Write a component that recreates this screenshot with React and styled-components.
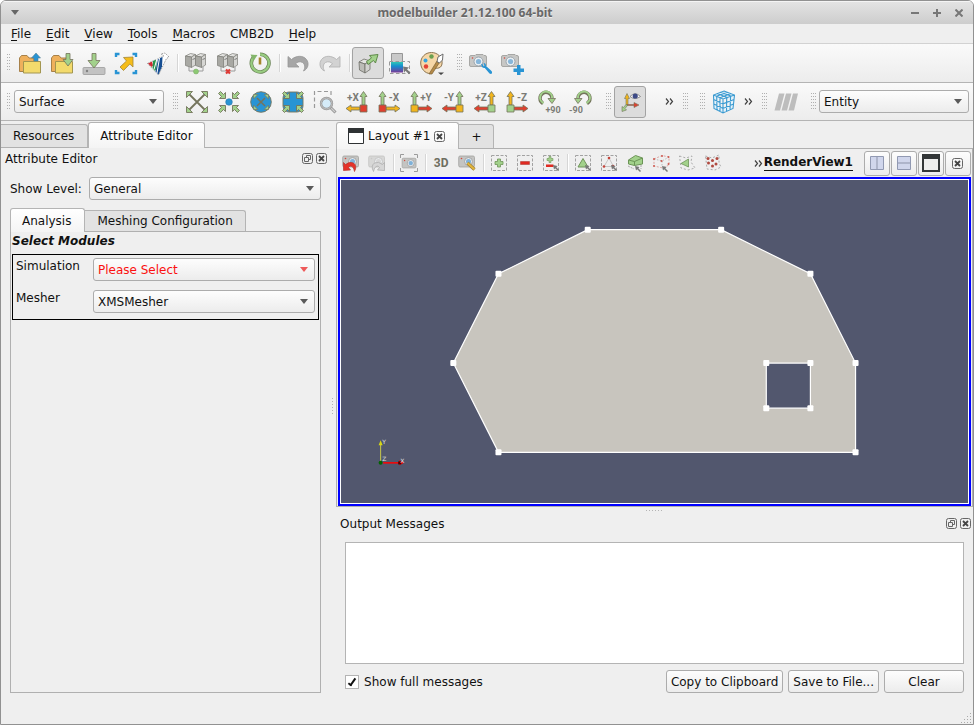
import React, { useState } from 'react';
import styled, { createGlobalStyle, css } from 'styled-components';

const GREEN = '#a2d18b';
const BLUE = '#2894d4';
const RED = '#e0402f';
const YELLOW = '#f2b51d';
const INK = '#74745c';

// ---------- icons ----------

const Svg24 = ({ children }) => (
  <svg width="24" height="24" viewBox="0 0 24 24" fill="none" aria-hidden="true">{children}</svg>
);

const Svg18 = ({ children }) => (
  <svg width="18" height="18" viewBox="0 0 18 18" fill="none" aria-hidden="true">{children}</svg>
);

const Folder = () => (
  <>
    <path d="M1.500 20.500V7l2-2.500h5.500l2 2.500h5v13.500z" fill="#efb05c" stroke="#a7814a" />
    <path d="M5.500 10.500h17v11.500h-17z" fill="#f3da6c" stroke="#a39650" />
  </>
);

const OpenIcon = () => (
  <Svg24>
    <Folder />
    <path d="M18 2l4.500 5H20v3h-4V7h-2.500z" fill={BLUE} stroke="#5c7f8f" strokeWidth=".6" />
  </Svg24>
);

const OpenDownIcon = () => (
  <Svg24>
    <Folder />
    <path d="M16 2.500h4v6h3L18 15l-5-6.500h3z" fill={GREEN} stroke={INK} strokeWidth=".8" />
  </Svg24>
);

const SaveDataIcon = () => (
  <Svg24>
    <path d="M2 16.500h20q1 0 1 1v5q0 1-1 1H2q-1 0-1-1v-5q0-1 1-1z" fill="#c2c2c2" stroke="#9c9c9c" strokeWidth=".8" />
    <circle cx="5" cy="20" r="1.200" fill="#808080" />
    <path d="M10 2.500h4v7h4L12 17l-6-7.500h4z" fill={GREEN} stroke={INK} strokeWidth=".8" />
  </Svg24>
);

const ExtractIcon = () => (
  <Svg24>
    <path d="M2 6V3h3.500M18.500 3H22v3M2 19v3h3.500M18.500 22H22v-3" stroke={BLUE} strokeWidth="2.400" />
    <path d="M19 6v10l-3.200-3-6.300 6.500-3.500-3.500L12.500 10l-3-3.500z" fill="#f5bd1a" stroke="#a38637" strokeWidth=".8" />
  </Svg24>
);

const FlaskIcon = () => (
  <Svg24>
    <path d="M1.500 12.500L18 5l-3-2 4-1 4 4-2.500 1.500L12.500 24z" fill="#fff" stroke="#777" strokeWidth=".7" strokeDasharray="1.500 1" />
    <path d="M2 12.500l4-2 1 4-1.500 1.500z" fill="#cf2a34" />
    <path d="M7 10l3.500-1.500v9l-1.500 2.500L6.500 17z" fill="#27954d" />
    <path d="M12 8l4.500-2-.5 9.500-3.500 8-3-3z" fill="#174f93" />
    <path d="M8 18.500l3-11M11 22l2.500-15" stroke="#fff" strokeWidth="1" />
  </Svg24>
);

const Server = ({ x }) => (
  <g stroke="#7d7d77" strokeWidth=".7">
    <path d={`M${x} 5l5-2.500 5 1-4 2.500z`} fill="#e2e2e0" />
    <path d={`M${x} 5l6 1v10.500l-6-2z`} fill="#a8a8a3" />
    <path d={`M${x + 6} 6l4-2.500v10.500l-4 2.500z`} fill="#d6d6d3" />
    <path d={`M${x + 7} 8.500l2.500-1`} stroke="#555" />
  </g>
);

const ConnectIcon = () => (
  <Svg24>
    <Server x={1.5} />
    <Server x={11.5} />
    <path d="M5 16v4h14v-4" stroke="#9a9a9a" />
    <circle cx="12" cy="20.500" r="2.500" fill="#8cc973" stroke="#78a865" strokeWidth=".5" />
  </Svg24>
);

const DisconnectIcon = () => (
  <Svg24>
    <Server x={1.5} />
    <Server x={11.5} />
    <path d="M5 16v4h14v-4" stroke="#9a9a9a" />
    <path d="M10 18.500l4 4M14 18.500l-4 4" stroke="#dd3a36" strokeWidth="2.200" />
  </Svg24>
);

const HistoryIcon = () => (
  <Svg24>
    <path d="M6 5.800a8.800 8.800 0 1 0 6-2.500" stroke="#6b8457" strokeWidth="3.600" />
    <path d="M6 5.800a8.800 8.800 0 1 0 6-2.500" stroke="#98cc81" strokeWidth="2.200" />
    <path d="M2.500 3.500l7 .5-4 6z" fill="#84b66c" />
    <path d="M12 6.500v7" stroke="#a5862c" strokeWidth="2.600" />
  </Svg24>
);

const UndoIcon = ({ flip, fill, stroke }) => (
  <Svg24>
    <path
      transform={flip ? 'matrix(-1 0 0 1 24 0)' : undefined}
      d="M2 5.500l3.500 3C10 4.500 17 4 20.500 8.500c3 4 1.500 9.500-3 11.500 2-3.500 1.500-7-1-8.500-2.500-1.500-5-.5-7 1.200L13 16H2z"
      fill={fill}
      stroke={stroke}
      strokeWidth=".8"
    />
  </Svg24>
);

const BoxArrowIcon = () => (
  <Svg24>
    <path d="M3 11l5-3 6 2-5 3z" fill="#e4e4e1" stroke="#6f6f68" strokeWidth=".8" />
    <path d="M3 11l6 2v9l-5.500-3z" fill="#bcbcb7" stroke="#6f6f68" strokeWidth=".8" />
    <path d="M9 13l5-3v8.500L9 22z" fill="#d2d2cf" stroke="#6f6f68" strokeWidth=".8" />
    <path d="M10.500 10.500l5-3.500-2-2.500L22 3.500 19.500 12l-2-2.500-5.500 4z" fill={GREEN} stroke="#5f8a4a" />
  </Svg24>
);

const ColorMapIcon = () => (
  <Svg24>
    <defs>
      <linearGradient id="colormap" x1="0" y1="0" x2="0" y2="1">
        <stop offset="0" stopColor="#2fc6b4" />
        <stop offset=".4" stopColor="#158dd0" />
        <stop offset="1" stopColor="#7a3a96" />
      </linearGradient>
    </defs>
    <path d="M3.500 2.500h11v9h-11z" fill="#c9c9c9" stroke="#969696" />
    <path d="M3 11h12v10.500H3z" fill="url(#colormap)" />
    <path d="M1.500 10.500h20v12h-20z" stroke="#999" strokeDasharray="3.500 2.500" />
    <path d="M15 15.500l6 1-2 1.800 3.500 3.500-1.500 1.500-3.500-3.500-1.500 2z" fill="#777" />
  </Svg24>
);

const PaletteIcon = () => (
  <Svg24>
    <path d="M11.500 1.500C5 1.500.7 6.500.7 12S5 22.500 10 22.500c2.500 0 1.500-3 3-4.500s8 1 9-5c1-6.500-4.500-11.500-10.500-11.500z" fill="#f6d7a8" stroke="#8a7350" />
    <circle cx="11.500" cy="5.500" r="2.200" fill="#6a9f4f" />
    <circle cx="5.500" cy="9.500" r="2" fill="#36a3e0" />
    <circle cx="6" cy="15.500" r="2.200" fill="#e34234" />
    <path d="M9 23l8-13 2.500 1.500L12 23z" fill="#b48a48" stroke="#7b6138" strokeWidth=".7" />
    <path d="M17 10.500l1-4.500 5-3-.5 6-3 3z" fill="#fff" stroke="#6b6b6b" />
    <path d="M18 21.500h6L21 24z" fill="#444" />
  </Svg24>
);

const CameraBody = () => (
  <>
    <path d="M2 4.500h4l1-1h7l1 1h1q1.500 0 1.500 1.500v8q0 1.500-1.500 1.500H2Q.5 15.500.5 14V6Q.5 4.500 2 4.500z" fill="#c7c7c5" stroke="#a0a09e" strokeWidth=".9" />
    <circle cx="9.500" cy="10.500" r="4.500" fill="#e9eef2" stroke="#9aa4ac" />
    <circle cx="9.500" cy="10.500" r="2.600" fill="#86b6da" />
    <circle cx="3.500" cy="7" r=".8" fill="#d34b40" />
  </>
);

const CameraToolIcon = () => (
  <Svg24>
    <CameraBody />
    <path d="M13.500 13q-1.500-1-1 2 1 2.500 3.300 2l4.700 5.500q2 1 2.500-.5.500-1.500-1-2.500l-5-4.500q0-3-2.500-3l1 2.500-1 1z" fill={BLUE} />
  </Svg24>
);

const CameraAddIcon = () => (
  <Svg24>
    <CameraBody />
    <path d="M16 14h3.500v3.500H23V21h-3.500v3H16v-3h-3.500v-3.500H16z" fill={BLUE} />
  </Svg24>
);

const Heads = ({ out }) => {
  // the same arrow head turned to each of the four corners
  const head = out ? 'M1.500 1.500h6l-6 6z' : 'M8.500 8.500h-6l2-2-3-3 2-2 3 3 2-2z';
  return [0, 90, 180, 270].map(a => (
    <path key={a} d={head} transform={`rotate(${a} 12 12)`} fill={GREEN} stroke={INK} strokeWidth=".9" />
  ));
};

const ResetIcon = () => (
  <Svg24>
    <path d="M4 4l16 16M20 4L4 20" stroke={INK} strokeWidth="1.800" />
    <Heads out />
  </Svg24>
);

const ZoomDataIcon = () => (
  <Svg24>
    <circle cx="12" cy="12" r="3.300" fill={BLUE} stroke="#2b77a8" strokeWidth=".6" />
    <Heads />
  </Svg24>
);

const ZoomClosestIcon = () => (
  <Svg24>
    <circle cx="12" cy="12" r="10.300" fill={BLUE} stroke={INK} strokeWidth=".9" />
    <path d="M8 8l8 8M16 8l-8 8" stroke={INK} strokeWidth="1.500" />
    <g transform="translate(3.500 3.500) scale(.71)"><Heads out /></g>
  </Svg24>
);

const ZoomBoxIcon = () => (
  <Svg24>
    <rect x="2" y="2" width="20" height="20" rx="6" fill={BLUE} stroke={INK} strokeWidth=".9" />
    <Heads />
  </Svg24>
);

const ZoomRectIcon = () => (
  <Svg24>
    <path d="M1.500 18V1.500H18V7" stroke="#999" strokeWidth="1.200" strokeDasharray="4 2.500" />
    <path d="M17 17l5.500 5.500" stroke="#929292" strokeWidth="3" />
    <path d="M17.500 17.500l4.500 4.500" stroke="#cfcfcf" strokeWidth="1.200" />
    <circle cx="13.500" cy="13.500" r="5.500" fill="#d5ebf8" stroke="#969696" strokeWidth="2.400" />
    <circle cx="13.500" cy="13.500" r="5.500" stroke="#c8c8c8" />
  </Svg24>
);

const AxisIcon = ({ label, right, square, up, side }) => (
  <Svg24>
    <g stroke={INK} strokeWidth=".8">
      <g transform={right ? undefined : 'matrix(-1 0 0 1 24 0)'}>
        <path d="M17 15V6.500h-2l3.500-5 3.500 5h-2V15z" fill={up} />
        <path d="M15 17H6v-2l-5 3.500 5 3.500v-2h9z" fill={side} />
        <path d="M15 15h7v7h-7z" fill={square} />
      </g>
    </g>
    <AxisText x={right ? 8 : 17} y="11" textAnchor="middle">{label}</AxisText>
  </Svg24>
);

const RotateIcon = ({ label, flip }) => (
  <Svg24>
    <g transform={flip ? 'matrix(-1 0 0 1 24 0)' : undefined}>
      <path d="M6 13.500A6 6 0 1 1 15 8" stroke={INK} strokeWidth="3.400" />
      <path d="M6.500 13A6 6 0 1 1 15 8.500" stroke={GREEN} strokeWidth="2" />
      <path d="M11 8.500h7.500l-3.500 5z" fill={GREEN} stroke={INK} strokeWidth=".8" />
    </g>
    <AxisText $size={9} x={flip ? 7 : 16} y="23" textAnchor="middle">{label}</AxisText>
  </Svg24>
);

const AxesEyeIcon = () => (
  <Svg24>
    <path d="M8 15V8.500H6.500l2.500-5 2.500 5H10V15z" fill={YELLOW} stroke={INK} strokeWidth=".6" />
    <path d="M9 14.500h7v-2l5 2.500-5 2.500v-2H9z" fill={RED} stroke={INK} strokeWidth=".6" />
    <path d="M8 14.500L5.500 17.500 4 16.500v5l4.500-1.500-1.500-1.500 2.500-3z" fill={GREEN} stroke={INK} strokeWidth=".6" />
    <path d="M12 6.500Q17 1 22.500 6.500 17 10.500 12 6.500z" fill="#fff" stroke="#777" strokeWidth=".8" />
    <circle cx="17.200" cy="6" r="2.600" fill="#3d4a86" />
  </Svg24>
);

const CubeIcon = () => (
  <Svg24>
    <path
      d="M12 1l10.500 4L21 18.500 11 23 2 18.500 1.500 5zM1.500 5L11 9l11.500-4M11 9v14M8.500 2.300l11 4M5 3.600l11 4.100M15.500 2.300l-11 4M19 3.600L8 7.800M1.700 9.500L11 13.800l11-4.300M1.900 14L11 18.500l10.500-4.500M4.700 6.300L5 20M8 7.600V21.500M14.700 7.700L14.500 21.500M18.600 6.300L18 20"
      fill="#e6f3fb"
      stroke="#3c9bd1"
      strokeWidth="1.100"
    />
  </Svg24>
);

const HatchIcon = () => (
  <Svg24>
    <path d="M5 3.500h5.500L6 20.500H.5zM12 3.500h5.500L13 20.500H7.500zM19 3.500h5L20 20.500h-5.500z" fill="#bdbdbd" />
  </Svg24>
);

const SmallCamera = ({ faded }) => (
  <g transform="translate(0 -1)" opacity={faded ? 0.55 : 1}>
    <path d="M2 3h13q1.500 0 1.500 1.500v8q0 1.500-1.500 1.500H2Q.7 14 .7 12.500v-8Q.7 3 2 3z" fill="#c4c4c2" stroke="#a2a2a0" strokeWidth=".8" />
    <circle cx="10.500" cy="8.500" r="4" fill="#e3e8eb" stroke="#a5a5a5" />
    <circle cx="10.500" cy="8.500" r="2.500" fill={faded ? '#c3c3c3' : '#7fb1d8'} />
    <circle cx="3.500" cy="5.500" r=".8" fill={faded ? '#aaa' : '#d34b40'} />
  </g>
);

const BackArrow = ({ flip, color, edge }) => (
  <path
    transform={flip ? 'matrix(-1 0 0 1 18 0)' : undefined}
    d="M1.500 8.500l2 2q4-3.500 8-1.500 4 3 1 8.500-.5-4.500-3.500-5.500-1.500 0-2.500 1.500l2 2.500-7 .5z"
    fill={color}
    stroke={edge}
    strokeWidth=".7"
  />
);

const Pointer = ({ x = 11, y = 11 }) => (
  <path transform={`translate(${x} ${y})`} d="M0 0l4.500 1-1.200 1.200L6 5 5 6 2.200 3.300 1 4.500z" fill="#777" />
);

const Dashed = () => <path d="M1.500 1.500h15v15h-15z" stroke="#a2a2a2" strokeDasharray="3 1.500" />;

const CameraUndo = () => <Svg18><SmallCamera /><BackArrow color="#e63229" edge="#b5352f" /></Svg18>;
const CameraRedo = () => <Svg18><SmallCamera faded /><BackArrow flip color="#d6d6d6" edge="#a9a9a9" /></Svg18>;

const CaptureIcon = () => (
  <Svg18>
    <path d="M.5 4V.5H4M14 .5h3.500V4M.5 14v3.500H4M14 17.500h3.500V14" stroke="#9b9b9b" />
    <g transform="translate(1.500 2.500) scale(.88)"><SmallCamera /></g>
  </Svg18>
);

const AdjustCamera = () => (
  <Svg18>
    <SmallCamera />
    <path d="M9.500 9l7 6.500" stroke="#9a7d32" strokeWidth="3.200" />
    <path d="M9.500 9l6.800 6.300" stroke="#e2b53c" strokeWidth="2" />
  </Svg18>
);

const SelectAdd = () => (
  <Svg18>
    <Dashed />
    <path d="M7.500 5h3v2.500H13v3h-2.500V13h-3v-2.500H5v-3h2.500z" fill={GREEN} stroke="#6f9459" strokeWidth=".8" />
  </Svg18>
);

const SelectRemove = () => <Svg18><Dashed /><path d="M4.500 7.500h9v3h-9z" fill="#e02a22" stroke="#a8342d" strokeWidth=".5" /></Svg18>;

const SelectToggle = () => (
  <Svg18>
    <Dashed />
    <path d="M7 2.500h2v2h2v2H9v2H7v-2H5v-2h2z" fill={GREEN} stroke="#6f9459" strokeWidth=".6" />
    <path d="M4 10.500h7.500V13H4z" fill="#e02a22" />
    <Pointer />
  </Svg18>
);

const SelectCells = () => (
  <Svg18>
    <Dashed />
    <path d="M9 4.500l5 8.500H4z" fill={GREEN} stroke="#6f9459" />
    <Pointer />
  </Svg18>
);

const SelectPoints = () => (
  <Svg18>
    <Dashed />
    <path d="M9 4l4.500 8.500H4z" stroke="#bbb" strokeWidth=".8" />
    <g fill="#c4443a"><circle cx="9" cy="4" r="1.300" /><circle cx="4" cy="12.500" r="1.300" /><circle cx="13" cy="12" r="1.300" /></g>
    <Pointer />
  </Svg18>
);

const SelectFrustum = () => (
  <Svg18>
    <path d="M2.500 6L9.500 1.500l7 2.500v6l-8 1.500-6-1.500z" fill={GREEN} stroke="#6b9456" />
    <path d="M2.500 6l6 1.500 8-3.500M8.500 7.500v4" stroke="#6b9456" />
    <path d="M2 12l6 3M15 11v4" stroke="#aaa" strokeDasharray="2 1" />
    <Pointer x={9} y={12} />
  </Svg18>
);

const FrustumPoints = () => (
  <Svg18>
    <path d="M2 5l8-3.500L17 3v8l-6 3-9-2z" stroke="#dba7a3" strokeDasharray="2 1.500" />
    <path d="M2 5l8 2 7-4M10 7v6" stroke="#bbb" strokeDasharray="1.500 1.500" />
    <g fill="#cf5a50">
      <circle cx="2" cy="5" r="1" /><circle cx="10" cy="2" r="1" /><circle cx="16.500" cy="3" r="1" /><circle cx="2" cy="12" r="1" />
      <circle cx="9.500" cy="7" r="1" /><circle cx="16.500" cy="10" r="1" />
    </g>
    <Pointer x={10} y={12} />
  </Svg18>
);

const PolyCells = () => (
  <Svg18>
    <path d="M1.500 2L8 4l6-2-1 6 4 6-7 2-7-2z" stroke="#aaa" strokeDasharray="2 2" />
    <path d="M3 9.500L10.500 5v8z" fill={GREEN} stroke="#6f9459" strokeWidth=".8" />
  </Svg18>
);

const PolyPoints = () => (
  <Svg18>
    <path d="M1.500 2L8 4l7-3v8l2 4-6 3-8-1z" stroke="#aaa" strokeDasharray="2 2" />
    <g fill="#b04a40">
      <circle cx="4" cy="4.500" r="1.500" /><circle cx="8.500" cy="6.500" r="1.500" /><circle cx="13" cy="4.500" r="1.500" />
      <circle cx="4.500" cy="9" r="1.500" /><circle cx="12" cy="10" r="1.500" /><circle cx="8.500" cy="12" r="1.500" />
    </g>
  </Svg18>
);

const SplitH = () => (
  <Svg18>
    <path d="M2.500 2.500h13v13h-13z" fill="#d0d6ec" stroke="#9199b2" />
    <path d="M9 3v12" stroke="#8c93a9" />
  </Svg18>
);

const SplitV = () => (
  <Svg18>
    <path d="M2.500 2.500h13v13h-13z" fill="#d0d6ec" stroke="#9199b2" />
    <path d="M3 9h12" stroke="#8c93a9" />
  </Svg18>
);

const WindowIcon = () => (
  <Svg18>
    <path d="M1.500 1.500h15v15h-15z" fill="#fff" stroke="#2f3234" />
    <path d="M1 1h16v5H1z" fill="#2f3234" />
  </Svg18>
);

const MaximizeIcon = () => (
  <Svg18>
    <path d="M1 1h16v16H1z" fill="#eee" stroke="#333638" strokeWidth="2" />
    <path d="M0 0h18v5H0z" fill="#333638" />
  </Svg18>
);

const CloseIcon = () => (
  <svg width="11" height="11" viewBox="0 0 11 11" fill="none" aria-hidden="true">
    <rect x=".5" y=".5" width="10" height="10" rx="2" stroke="#666" />
    <path d="M3 3l5 5M8 3L3 8" stroke="#444" strokeWidth="1.800" />
  </svg>
);

const FloatIcon = () => (
  <svg width="11" height="11" viewBox="0 0 11 11" fill="none" aria-hidden="true">
    <rect x=".5" y=".5" width="10" height="10" rx="2" stroke="#666" />
    <path d="M4.500 4.500v-2h4v4h-2M2.500 4.500h4v4h-4z" stroke="#666" />
  </svg>
);

const OverflowGlyph = () => (
  <svg width="9" height="7" viewBox="0 0 9 7" fill="none" aria-hidden="true">
    <path d="M1 .5l2.500 3L1 6.500M5 .5l2.500 3L5 6.500" stroke="#444" strokeWidth="1.200" />
  </svg>
);

// ---------- data ----------

const MENUS = [['F', 'ile'], ['E', 'dit'], ['V', 'iew'], ['T', 'ools'], ['M', 'acros'], ['', 'CMB2D'], ['H', 'elp']];

const FILE_TOOLS = [
  ['Open', OpenIcon], ['Load', OpenDownIcon], ['Save data', SaveDataIcon], ['Extract', ExtractIcon], ['Model', FlaskIcon],
];

const CAMERA_TOOLS = [
  ['Reset', ResetIcon], ['Zoom to data', ZoomDataIcon], ['Zoom closest', ZoomClosestIcon],
  ['Zoom closest to data', ZoomBoxIcon], ['Zoom to box', ZoomRectIcon],
];

const AXES = [
  { label: '+X', right: true, square: RED, up: GREEN, side: YELLOW },
  { label: '-X', right: false, square: RED, up: GREEN, side: YELLOW },
  { label: '+Y', right: false, square: YELLOW, up: GREEN, side: RED },
  { label: '-Y', right: true, square: YELLOW, up: GREEN, side: RED },
  { label: '+Z', right: true, square: GREEN, up: YELLOW, side: RED },
  { label: '-Z', right: false, square: GREEN, up: YELLOW, side: RED },
];

const SELECTION_TOOLS = [
  ['Select cells', SelectCells], ['Select points', SelectPoints], ['Frustum cells', SelectFrustum],
  ['Frustum points', FrustumPoints], ['Polygon cells', PolyCells], ['Polygon points', PolyPoints],
];

const OUTLINE = [[247, 50], [380, 50], [469, 94], [514, 183], [514, 272], [158, 272], [113, 183], [158, 94]];
const HOLE = [[425, 183], [469, 183], [469, 228], [425, 228]];

const toPath = pts => `M${pts.map(p => p.join(' ')).join('L')}z`;

// ---------- parts ----------

const ComboBox = ({ id, label, options, error, width }) => (
  <ComboWrap $width={width} $error={error}>
    <Combo id={id} aria-label={label} $error={error}>
      {options.map(o => <option key={o}>{o}</option>)}
    </Combo>
  </ComboWrap>
);

const DockHeader = ({ title }) => (
  <DockTitle>
    <span>{title}</span>
    <TinyButton aria-label={`Float ${title}`}><FloatIcon /></TinyButton>
    <TinyButton aria-label={`Close ${title}`}><CloseIcon /></TinyButton>
  </DockTitle>
);

const Tools = ({ items }) => items.map(([name, Icon]) => (
  <ToolButton key={name} aria-label={name}><Icon /></ToolButton>
));

const RenderScene = () => (
  <Scene viewBox="0 0 627 323" role="img" aria-label="Surface mesh">
    <path d={toPath(OUTLINE) + toPath(HOLE)} fill="#c8c5be" fillRule="evenodd" stroke="#fff" strokeWidth="1.200" />
    {[...OUTLINE, ...HOLE].map(([x, y]) => (
      <rect key={`${x}-${y}`} x={x - 3} y={y - 3} width="6" height="6" rx="1" fill="#fff" />
    ))}
    <path d="M40.500 281v-17" stroke="#c8c84a" />
    <path d="M38.500 265l2-5 2 5z" fill="#d6d614" />
    <path d="M43 282.500h17" stroke="#f00" strokeWidth="1.500" />
    <path d="M59 280l5 2.500-5 2.500z" fill="#f00" />
    <rect x="58" y="281" width="3" height="3" fill="#500" />
    <circle cx="40.500" cy="282.500" r="2" fill="#006400" />
    <TriadText x="42" y="264">Y</TriadText>
    <TriadText x="42" y="281">Z</TriadText>
    <TriadText x="60" y="283">X</TriadText>
  </Scene>
);

const App = () => {
  const [fullMessages, setFullMessages] = useState(true);

  return (
    <>
      <GlobalStyle />
      <Window>
        <TitleBar>
          <TitleButton aria-label="Window menu">
            <svg width="8" height="5" viewBox="0 0 8 5"><path d="M0 0h8L4 5z" fill="#666" /></svg>
          </TitleButton>
          <h1>modelbuilder 21.12.100 64-bit</h1>
          <TitleButton aria-label="Minimize">
            <svg width="8" height="8" viewBox="0 0 8 8"><path d="M0 4h8" stroke="#777" strokeWidth="2" /></svg>
          </TitleButton>
          <TitleButton aria-label="Maximize">
            <svg width="8" height="8" viewBox="0 0 8 8"><path d="M0 4h8M4 0v8" stroke="#777" strokeWidth="2" /></svg>
          </TitleButton>
          <TitleButton aria-label="Close">
            <svg width="8" height="8" viewBox="0 0 8 8"><path d="M.5.5l7 7M7.500.5l-7 7" stroke="#777" strokeWidth="2" /></svg>
          </TitleButton>
        </TitleBar>

        <MenuBar>
          {MENUS.map(([key, rest]) => (
            <MenuItem key={rest}>{key && <u>{key}</u>}{rest}</MenuItem>
          ))}
        </MenuBar>

        <ToolBar>
          <Handle $first />
          <Tools items={FILE_TOOLS} />
          <Separator />
          <Tools items={[['Connect', ConnectIcon], ['Disconnect', DisconnectIcon], ['History', HistoryIcon]]} />
          <Separator />
          <ToolButton aria-label="Undo"><UndoIcon fill="#a6a6a6" stroke="#979797" /></ToolButton>
          <ToolButton aria-label="Redo"><UndoIcon flip fill="#d2d2d2" stroke="#b0b0b0" /></ToolButton>
          <Separator />
          <ToolButton $pressed aria-label="Auto apply"><BoxArrowIcon /></ToolButton>
          <Tools items={[['Color map', ColorMapIcon], ['Palette', PaletteIcon]]} />
          <Handle />
          <Tools items={[['Adjust camera', CameraToolIcon], ['Add camera', CameraAddIcon]]} />
        </ToolBar>

        <ToolBar>
          <Handle $first />
          <ComboBox label="Representation" options={['Surface', 'Wireframe', 'Points']} width={150} />
          <Handle />
          <Tools items={CAMERA_TOOLS} />
          {AXES.map(a => <ToolButton key={a.label} aria-label={`View ${a.label}`}><AxisIcon {...a} /></ToolButton>)}
          <ToolButton aria-label="Rotate +90"><RotateIcon label="+90" /></ToolButton>
          <ToolButton aria-label="Rotate -90"><RotateIcon flip label="-90" /></ToolButton>
          <Handle />
          <ToolButton $pressed aria-label="Show orientation axes"><AxesEyeIcon /></ToolButton>
          <OverflowButton $lead={19} aria-label="More axes tools"><OverflowGlyph /></OverflowButton>
          <Handle />
          <Handle />
          <ToolButton aria-label="Grid"><CubeIcon /></ToolButton>
          <OverflowButton $lead={4} aria-label="More grid tools"><OverflowGlyph /></OverflowButton>
          <Handle />
          <ToolButton aria-label="Color by"><HatchIcon /></ToolButton>
          <Handle />
          <ComboBox label="Color mode" options={['Entity', 'Volume', 'Field']} width={150} />
        </ToolBar>

        <Workspace>
          <Dock>
            <TabBar $height={27}>
              <Tab><button>Resources</button></Tab>
              <Tab $active><button>Attribute Editor</button></Tab>
            </TabBar>
            <DockHeader title="Attribute Editor" />
            <LevelRow>
              <label htmlFor="level">Show Level:</label>
              <ComboBox id="level" options={['General', 'Advanced']} />
            </LevelRow>
            <Attributes>
              <TabBar $height={25}>
                <Tab $active><button>Analysis</button></Tab>
                <Tab><button>Meshing Configuration</button></Tab>
              </TabBar>
              <AttributePane>
                <h2>Select Modules</h2>
                <Modules>
                  <label htmlFor="simulation">Simulation</label>
                  <ComboBox id="simulation" options={['Please Select', 'AdH']} error />
                  <label htmlFor="mesher">Mesher</label>
                  <ComboBox id="mesher" options={['XMSMesher']} />
                </Modules>
              </AttributePane>
            </Attributes>
          </Dock>

          <Splitter $vertical />

          <Dock>
            <TabBar $height={28}>
              <Tab $active $icon>
                <button><WindowIcon /> Layout #1</button>
                <TinyButton aria-label="Close layout"><CloseIcon /></TinyButton>
              </Tab>
              <Tab><button>+</button></Tab>
            </TabBar>
            <ViewPane>
              <ViewTools>
                <SmallTool aria-label="Camera undo"><CameraUndo /></SmallTool>
                <SmallTool aria-label="Camera redo"><CameraRedo /></SmallTool>
                <Separator />
                <SmallTool aria-label="Capture"><CaptureIcon /></SmallTool>
                <Separator />
                <SmallTool>3D</SmallTool>
                <SmallTool aria-label="Adjust view"><AdjustCamera /></SmallTool>
                <Separator />
                <SmallTool aria-label="Add selection"><SelectAdd /></SmallTool>
                <SmallTool aria-label="Subtract selection"><SelectRemove /></SmallTool>
                <SmallTool aria-label="Toggle selection"><SelectToggle /></SmallTool>
                <Separator />
                {SELECTION_TOOLS.map(([name, Icon]) => <SmallTool key={name} aria-label={name}><Icon /></SmallTool>)}
                <ViewName><OverflowGlyph /><strong>RenderView1</strong></ViewName>
                <FrameButton aria-label="Split horizontal"><SplitH /></FrameButton>
                <FrameButton aria-label="Split vertical"><SplitV /></FrameButton>
                <FrameButton aria-label="Maximize view"><MaximizeIcon /></FrameButton>
                <FrameButton aria-label="Close view"><CloseIcon /></FrameButton>
              </ViewTools>
              <Viewport><RenderScene /></Viewport>
            </ViewPane>

            <Splitter />

            <DockHeader title="Output Messages" />
            <Output>
              <Messages aria-label="Output Messages" readOnly />
              <OutputActions>
                <CheckLabel>
                  <input type="checkbox" checked={fullMessages} onChange={e => setFullMessages(e.target.checked)} />
                  Show full messages
                </CheckLabel>
                <PushButton>Copy to Clipboard</PushButton>
                <PushButton>Save to File...</PushButton>
                <PushButton>Clear</PushButton>
              </OutputActions>
            </Output>
          </Dock>
        </Workspace>

        <StatusBar>
          <svg width="12" height="12" viewBox="0 0 12 12" aria-hidden="true">
            <path d="M9 1.500h1M6 4.500h1M9 4.500h1M3 7.500h1M6 7.500h1M9 7.500h1M0 10.500h1M3 10.500h1M6 10.500h1M9 10.500h1" stroke="#aaa" />
          </svg>
        </StatusBar>
      </Window>
    </>
  );
};

// ---------- styles ----------

const GlobalStyle = createGlobalStyle`
  *, *::before, *::after {
    box-sizing: border-box;
  }

  body {
    margin: 0;
    background: #fff;
  }

  body, button, select, textarea, input {
    font-family: "DejaVu Sans", sans-serif;
    font-size: 12px;
    line-height: 16px;
    color: #111;
  }

  button {
    padding: 0;
    border: 0;
    background: none;
    white-space: nowrap;
  }

  svg {
    display: block;
    flex: none;
  }
`;

const face = css`
  border: 1px solid #acacac;
  border-radius: 3px;
  background: linear-gradient(#fdfdfd, #ececec);
`;

const AxisText = styled.text`
  font: bold ${({ $size = 10 }) => $size}px Roboto, sans-serif;
  fill: #7b7b76;
`;

const TriadText = styled.text`
  font: 6px "DejaVu Sans", sans-serif;
  fill: #e0e0e0;
`;

const Window = styled.div`
  display: flex;
  flex-direction: column;
  height: 100vh;
  min-height: 560px;
  border: 1px solid #919191;
  border-radius: 6px 6px 0 0;
  background: #efefef;
  overflow: hidden;
`;

const TitleBar = styled.header`
  display: flex;
  align-items: center;
  height: 23px;
  padding: 0 3px;
  background: linear-gradient(#e4e4e4, #cdcdcd);
  box-shadow: inset 0 1px #f4f4f4;

  h1 {
    flex: 1;
    margin: 0;
    text-align: center;
    font: bold 12px/16px "Noto Sans", sans-serif;
    color: #686868;
    text-shadow: 0 1px #eee;
  }
`;

const TitleButton = styled.button`
  display: flex;
  justify-content: center;
  width: 22px;
`;

const MenuBar = styled.nav`
  display: flex;
  align-items: center;
  gap: 1px;
  height: 20px;
  padding-left: 3px;
  border-bottom: 1px solid #d2d2d2;
`;

const MenuItem = styled.button`
  padding: 0 7px;

  u {
    text-underline-offset: 2px;
  }
`;

const ToolBar = styled.div`
  display: flex;
  align-items: center;
  height: 39px;
  padding-right: 3px;
  border-bottom: 1px solid #b4b4b4;
  background: linear-gradient(#fafafa, #ececec);

  & + & {
    height: 38px;
  }
`;

const Handle = styled.span`
  flex: none;
  width: ${({ $first }) => ($first ? 13 : 17)}px;
  height: 18px;
  padding-right: 3px;
  padding-left: ${({ $first }) => ($first ? 5 : 8)}px;
  background: conic-gradient(from 90deg at 1px 1px, transparent 75%, #b0b0b0 0) content-box content-box;
  background-size: 2px 3px;
`;

const Separator = styled.span`
  flex: none;
  width: 6px;
  height: 18px;
  border-left: 3px solid transparent;
  background: linear-gradient(90deg, #d6d6d6 1px, #fff 1px, #fff 2px, transparent 2px) padding-box;
`;

const ToolButton = styled.button`
  display: flex;
  flex: none;
  align-items: center;
  justify-content: center;
  width: 32px;
  height: 32px;
  border: 1px solid ${({ $pressed }) => ($pressed ? '#a3a3a3' : 'transparent')};
  border-radius: 3px;
  background: ${({ $pressed }) => ($pressed ? '#dcdcdc' : 'none')};
`;

const OverflowButton = styled.button`
  flex: none;
  padding-left: ${({ $lead }) => $lead}px;
`;

const ComboWrap = styled.span`
  position: relative;
  display: block;
  flex: ${({ $width }) => ($width ? `0 0 ${$width}px` : '1')};
  min-width: 0;

  &::after {
    content: '';
    position: absolute;
    top: 9px;
    right: 7px;
    border: 4px solid transparent;
    border-top: 5px solid ${({ $error }) => ($error ? '#ee5a5a' : '#5a5a5a')};
    border-bottom: 0;
    pointer-events: none;
  }
`;

const Combo = styled.select`
  ${face}
  display: block;
  appearance: none;
  width: 100%;
  height: 23px;
  padding: 0 16px 0 4px;
  color: ${({ $error }) => ($error ? '#fb1010' : '#111')};
`;

const Workspace = styled.main`
  display: grid;
  grid-template-columns: 34fr 7px 66fr;
  flex: 1;
  min-height: 0;
`;

const Dock = styled.section`
  display: flex;
  flex-direction: column;
  min-width: 0;
`;

const TabBar = styled.div`
  display: flex;
  flex: none;
  align-items: flex-end;
  height: ${({ $height }) => $height}px;
  border-bottom: 1px solid #b0b0b0;
`;

const Tab = styled.div`
  display: flex;
  align-items: center;
  align-self: stretch;
  margin-top: 3px;
  padding: 0 12px;
  border: 1px solid #b4b4b4;
  border-bottom: 0;
  border-left-width: 0;
  border-radius: 0 3px 0 0;
  background: #e2e2e2;

  &:first-child {
    padding-right: 13px;
  }

  ${({ $active }) => $active && css`
    margin: 1px 0 -1px;
    padding: 0 11px;
    border-left-width: 1px;
    border-radius: 3px 3px 0 0;
    background: linear-gradient(#fff, #f4f4f4);
  `}

  ${({ $icon }) => $icon && css`
    gap: 4px;
    padding-left: 10px;
  `}

  > button {
    display: flex;
    align-items: center;
    gap: 3px;
  }
`;

const DockTitle = styled.div`
  display: flex;
  flex: none;
  align-items: center;
  gap: 3px;
  height: 21px;
  padding: 0 2px 0 4px;

  span {
    flex: 1;
  }
`;

const TinyButton = styled.button`
  flex: none;
`;

const LevelRow = styled.div`
  display: flex;
  align-items: center;
  padding: 8px 8px 7px 9px;

  label {
    flex: 0 0 79px;
  }
`;

const Attributes = styled.div`
  display: flex;
  flex: 1;
  flex-direction: column;
  min-height: 0;
  margin: 0 8px 0 9px;
`;

const AttributePane = styled.div`
  flex: 1;
  padding: 1px;
  border: 1px solid #b0b0b0;
  border-top: 0;

  h2 {
    margin: 0 0 5px;
    font-size: 12px;
    font-style: italic;
    line-height: 16px;
  }
`;

const Modules = styled.div`
  display: grid;
  grid-template-columns: 77px 1fr;
  row-gap: 9px;
  padding: 3px 3px 6px;
  border: 1px solid #000;
`;

const Splitter = styled.div`
  display: flex;
  flex: none;
  align-items: center;
  justify-content: center;
  height: ${({ $vertical }) => ($vertical ? 'auto' : '6px')};

  &::before {
    content: '';
    width: ${({ $vertical }) => ($vertical ? 1 : 18)}px;
    height: ${({ $vertical }) => ($vertical ? 18 : 1)}px;
    background: repeating-linear-gradient(
      ${({ $vertical }) => ($vertical ? '180deg' : '90deg')}, #b4b4b4 0 1px, transparent 1px 3px
    );
  }
`;

const ViewPane = styled.div`
  display: flex;
  flex: 1;
  flex-direction: column;
  min-height: 0;
  padding: 0 1px;
  border: 1px solid #b0b0b0;
  border-top: 0;
`;

const ViewTools = styled.div`
  display: flex;
  flex: none;
  align-items: center;
  height: 28px;
`;

const SmallTool = styled.button`
  display: flex;
  flex: none;
  align-items: center;
  justify-content: center;
  width: 26px;
  height: 26px;
  font: bold 12px/16px Roboto, sans-serif;
  color: #6e6e60;
`;

const ViewName = styled.span`
  display: flex;
  flex: 1;
  align-items: center;
  justify-content: flex-end;
  gap: 1px;
  margin-right: 10px;

  strong {
    border-bottom: 1px solid #111;
    line-height: 15px;
  }
`;

const FrameButton = styled.button`
  ${face}
  display: flex;
  flex: none;
  align-items: center;
  justify-content: center;
  width: 26px;
  height: 25px;
  margin-left: 1px;
`;

const Viewport = styled.div`
  flex: 1;
  min-height: 0;
  border: 2px solid #00f;
  box-shadow: inset 0 0 0 1px #fff;
  background: #52576e;
`;

const Scene = styled.svg`
  width: 100%;
  height: 100%;
`;

const Output = styled.div`
  padding: 8px 9px 0;
`;

const Messages = styled.textarea`
  display: block;
  width: 100%;
  height: 122px;
  border: 1px solid #b4b4b4;
  background: #fff;
  resize: none;
`;

const OutputActions = styled.div`
  display: flex;
  gap: 5px;
  margin-top: 6px;
`;

const CheckLabel = styled.label`
  display: flex;
  flex: 1;
  align-items: center;
  gap: 5px;

  input {
    appearance: none;
    display: grid;
    place-items: center;
    width: 14px;
    height: 14px;
    margin: 0;
    border: 1px solid #b4b4b4;
    background: #fff;
  }

  input:checked::before {
    content: '';
    width: 4px;
    height: 9px;
    border: solid #111;
    border-width: 0 2px 2px 0;
    transform: rotate(35deg);
  }
`;

const PushButton = styled.button`
  ${face}
  min-width: 80px;
  height: 23px;
  padding: 0 4px;
`;

const StatusBar = styled.footer`
  display: flex;
  align-items: flex-end;
  justify-content: flex-end;
  height: 31px;
`;

export default App;
